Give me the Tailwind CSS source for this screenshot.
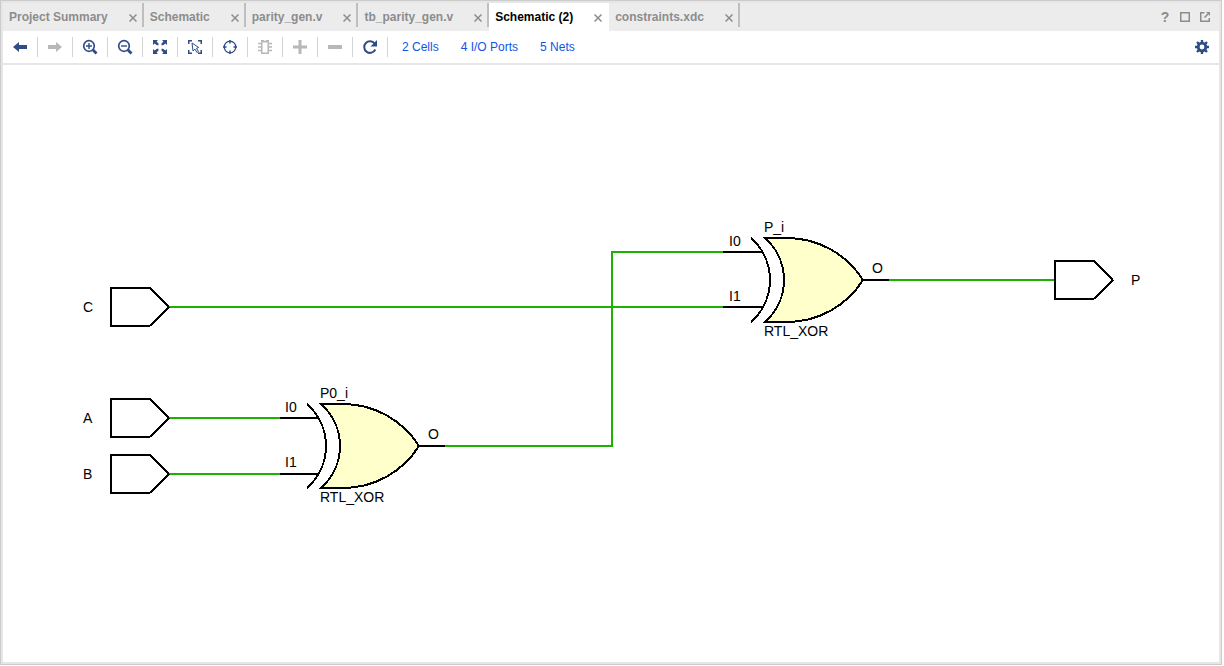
<!DOCTYPE html>
<html lang="en">
<head>
<meta charset="utf-8">
<meta name="viewport" content="width=device-width, initial-scale=1">
<title>Schematic (2)</title>
<script src="https://cdn.jsdelivr.net/npm/@tailwindcss/browser@4"></script>
</head>
<body class="h-screen bg-white pr-0.5 pb-px font-['Liberation_Sans',Arial,sans-serif] text-xs">
<div class="h-full border border-[#cccccc]">
<div class="flex h-full flex-col border-2 border-[#e6e6e6] bg-white">

  <header class="flex h-7 shrink-0 justify-between bg-[#ececec]">
    <nav class="flex font-bold text-[#8c8c8c]" aria-label="Open documents">
      <div class="flex pl-1.5">
        <button class="pr-5">Project Summary</button>
        <button class="mr-1 w-2.5 pt-0.5" aria-label="Close Project Summary"><svg class="mx-auto size-2" viewBox="0 0 8 8" fill="none" stroke="#8c8c8c" stroke-width="1.5"><path d="M0.5 0.5l7 7M7.5 0.5l-7 7"/></svg></button>
        <span class="h-6 w-0.5 bg-[#bfbfbf]"></span>
      </div>
      <div class="flex pl-1.5">
        <button class="pr-5">Schematic</button>
        <button class="mr-1 w-2.5 pt-0.5" aria-label="Close Schematic"><svg class="mx-auto size-2" viewBox="0 0 8 8" fill="none" stroke="#8c8c8c" stroke-width="1.5"><path d="M0.5 0.5l7 7M7.5 0.5l-7 7"/></svg></button>
        <span class="h-6 w-0.5 bg-[#bfbfbf]"></span>
      </div>
      <div class="flex pl-1.5">
        <button class="pr-5">parity_gen.v</button>
        <button class="mr-1 w-2.5 pt-0.5" aria-label="Close parity_gen.v"><svg class="mx-auto size-2" viewBox="0 0 8 8" fill="none" stroke="#8c8c8c" stroke-width="1.5"><path d="M0.5 0.5l7 7M7.5 0.5l-7 7"/></svg></button>
        <span class="h-6 w-0.5 bg-[#bfbfbf]"></span>
      </div>
      <div class="flex pl-1.5">
        <button class="pr-5">tb_parity_gen.v</button>
        <button class="mr-1 w-2.5 pt-0.5" aria-label="Close tb_parity_gen.v"><svg class="mx-auto size-2" viewBox="0 0 8 8" fill="none" stroke="#8c8c8c" stroke-width="1.5"><path d="M0.5 0.5l7 7M7.5 0.5l-7 7"/></svg></button>
        <span class="h-6 w-0.5 bg-[#bfbfbf]"></span>
      </div>
      <div class="flex bg-white pl-1.5 text-black">
        <button class="pr-5" aria-current="page">Schematic (2)</button>
        <button class="mr-1 w-2.5 pt-0.5" aria-label="Close Schematic (2)"><svg class="mx-auto size-2" viewBox="0 0 8 8" fill="none" stroke="#8c8c8c" stroke-width="1.5"><path d="M0.5 0.5l7 7M7.5 0.5l-7 7"/></svg></button>
        <span class="h-6 w-0.5"></span>
      </div>
      <div class="flex pl-1.5">
        <button class="pr-5">constraints.xdc</button>
        <button class="mr-1 w-2.5 pt-0.5" aria-label="Close constraints.xdc"><svg class="mx-auto size-2" viewBox="0 0 8 8" fill="none" stroke="#8c8c8c" stroke-width="1.5"><path d="M0.5 0.5l7 7M7.5 0.5l-7 7"/></svg></button>
        <span class="h-6 w-0.5 bg-[#bfbfbf]"></span>
      </div>
    </nav>
    <div class="flex items-center gap-2.5 pr-[9px] text-[#8c8c8c]">
      <button class="w-2.5 text-sm font-bold" aria-label="Help">?</button>
      <button aria-label="Maximize"><svg class="size-2.5" viewBox="0 0 10 10" fill="none" stroke="currentColor" stroke-width="1.5"><path d="M0.75 0.75h8.5v8.5h-8.5z"/></svg></button>
      <button aria-label="Float"><svg class="size-2.5" viewBox="0 0 10 10" fill="none" stroke="currentColor" stroke-width="1.5"><path d="M4.5 0.75H0.75v8.5h8.5V6M4.5 5.5L8 2"/><path d="M6 0h4v4z" fill="currentColor" stroke="none"/></svg></button>
    </div>
  </header>

  <div class="flex h-[34px] shrink-0 items-center justify-between border-b-2 border-[#e6e6e6]">
    <div class="flex items-center">
      <div class="flex text-[#2f4c86] [&>button]:flex [&>button]:h-5 [&>button]:w-[35px] [&>button]:items-center [&>button]:justify-center [&>button]:border-r [&>button]:border-[#d4d4d4]">
        <button aria-label="Back"><svg class="size-4" viewBox="0 0 16 16" fill="currentColor"><path d="M1 8l6-5v3h8v4H7v3z"/></svg></button>
        <button aria-label="Forward" class="text-[#b8b8b8]"><svg class="size-4" viewBox="0 0 16 16" fill="currentColor"><path d="M15 8L9 3v3H1v4h8v3z"/></svg></button>
        <button aria-label="Zoom in"><svg class="size-4" viewBox="0 0 16 16" fill="none" stroke="currentColor"><circle cx="7" cy="7" r="5.3" stroke-width="1.7"/><path d="M4 7h6M7 4v6" stroke-width="1.4"/><path d="M10.8 10.8l3.700 3.700" stroke-width="2.8"/></svg></button>
        <button aria-label="Zoom out"><svg class="size-4" viewBox="0 0 16 16" fill="none" stroke="currentColor"><circle cx="7" cy="7" r="5.3" stroke-width="1.7"/><path d="M4 7h6" stroke-width="1.4"/><path d="M10.8 10.8l3.700 3.700" stroke-width="2.8"/></svg></button>
        <button aria-label="Zoom fit"><svg class="size-4" viewBox="0 0 16 16" fill="currentColor"><path d="M1 1h5L4.500 2.500 6.500 4.500v1.800H5L2.500 4.500 1 6zM15 1v5l-1.500-1.500L11 6.300H9.500V4.500l2-2L10 1zM1 15v-5l1.500 1.500L5 9.700h1.500v1.800l-2 2L6 15zM15 15h-5l1.500-1.500-2-2V9.700H11l2.500 1.800L15 10z"/></svg></button>
        <button aria-label="Zoom to selection"><svg class="size-4" viewBox="0 0 16 16" fill="none" stroke="currentColor"><path d="M1.75 5V1.75H5M11 1.75h3.25V5M1.75 11v3.25H5M11 14.25h3.25V11" stroke-width="1.5"/><path d="M5 4l1 8 1.9-1.9L10 13.500l1.500-1L9.500 9.300l2.200-.8z"/></svg></button>
        <button aria-label="Autofit selection"><svg class="size-4" viewBox="0 0 16 16" fill="none" stroke="currentColor"><circle cx="8" cy="8" r="5.8" stroke-width="1.3"/><path d="M8 1v3.500M8 11.500v3.500M1 8h3.500M11.500 8h3.500" stroke-width="1.5"/></svg></button>
        <button aria-label="Expand cell" class="text-[#b8b8b8]"><svg class="size-4" viewBox="0 0 16 16" fill="none" stroke="currentColor"><path d="M4.750 1.750h1.750v1h3v-1h1.750v12.500H4.750z" stroke-width="1.5"/><path d="M1 4.500h3M1 8h3M1 11.500h3M12 4.500h3M12 8h3M12 11.500h3" stroke-width="1.3"/></svg></button>
        <button aria-label="Add" class="text-[#b8b8b8]"><svg class="size-4" viewBox="0 0 16 16" fill="currentColor"><path d="M6.500 1h3v5.500H15v3H9.500V15h-3V9.500H1v-3h5.500z"/></svg></button>
        <button aria-label="Remove" class="text-[#b8b8b8]"><svg class="size-4" viewBox="0 0 16 16" fill="currentColor"><path d="M1 6h14v4H1z"/></svg></button>
        <button aria-label="Regenerate"><svg class="size-4" viewBox="0 0 16 16" fill="none" stroke="currentColor" stroke-width="2"><path d="M12.700 4.600A5.800 5.800 0 1 0 13.300 10.500"/><path d="M15 1v6.500H8.500z" fill="currentColor" stroke="none"/></svg></button>
      </div>
      <div class="flex gap-[22px] pl-3.5 text-[#0f55e6]">
        <a href="#cells">2 Cells</a>
        <a href="#ports">4 I/O Ports</a>
        <a href="#nets">5 Nets</a>
      </div>
    </div>
    <button class="mr-2.5 text-[#2f4c86]" aria-label="Settings"><svg class="size-3.5" viewBox="0 0 14 14" fill="none" stroke="currentColor"><circle cx="7" cy="7" r="3.800" stroke-width="2.800"/><path d="M7 0v2.500M7 11.500V14M0 7h2.500M11.500 7H14M2 2l1.800 1.800M10.200 10.200L12 12M2 12l1.800-1.800M10.200 3.800L12 2" stroke-width="2.400"/></svg></button>
  </div>

  <main class="min-h-0 flex-1">
    <svg class="h-full w-full" viewBox="3 65 1216 597" role="img" aria-label="Parity generator schematic">
      <defs>
        <g id="port" fill="none" stroke="#000">
          <path d="M41 39H2V1H41L60 20" stroke-width="2"/>
          <path d="M41 39L60 20" stroke-width="1.5"/>
        </g>
        <g id="xor" stroke="#000" stroke-width="2" fill="none">
          <path d="M14 0H36A90 90 0 0 1 112 42A90 90 0 0 1 36 84H14A56 56 0 0 0 14 0Z" fill="#ffffcc"/>
          <path d="M0 0A56 56 0 0 1 0 84"/>
          <path d="M112 42H138"/>
        </g>
      </defs>
      <g shape-rendering="crispEdges">
        <g fill="none" stroke="#1db100" stroke-width="2">
          <path d="M169 307H723"/>
          <path d="M169 418H280"/>
          <path d="M169 474H280"/>
          <path d="M445 446H612V252H723"/>
          <path d="M889 280H1054"/>
        </g>
        <path d="M280 418H319M280 474H319M723 252H763M723 307H763" stroke="#000" stroke-width="2"/>
        <use href="#port" x="109" y="287"/>
        <use href="#port" x="109" y="398"/>
        <use href="#port" x="109" y="454"/>
        <use href="#port" x="1053" y="260"/>
        <use href="#xor" x="307" y="404"/>
        <use href="#xor" x="751" y="238"/>
      </g>
      <g class="text-sm" fill="#000">
        <text x="83" y="312">C</text>
        <text x="83" y="423">A</text>
        <text x="83" y="479">B</text>
        <text x="1131" y="285">P</text>
        <text x="320" y="398">P0_i</text>
        <text x="285" y="412">I0</text>
        <text x="285" y="467">I1</text>
        <text x="428" y="439">O</text>
        <text x="320" y="502">RTL_XOR</text>
        <text x="764" y="232">P_i</text>
        <text x="729" y="246">I0</text>
        <text x="729" y="301">I1</text>
        <text x="872" y="273">O</text>
        <text x="764" y="336">RTL_XOR</text>
      </g>
    </svg>
  </main>

</div>
</div>
</body>
</html>
